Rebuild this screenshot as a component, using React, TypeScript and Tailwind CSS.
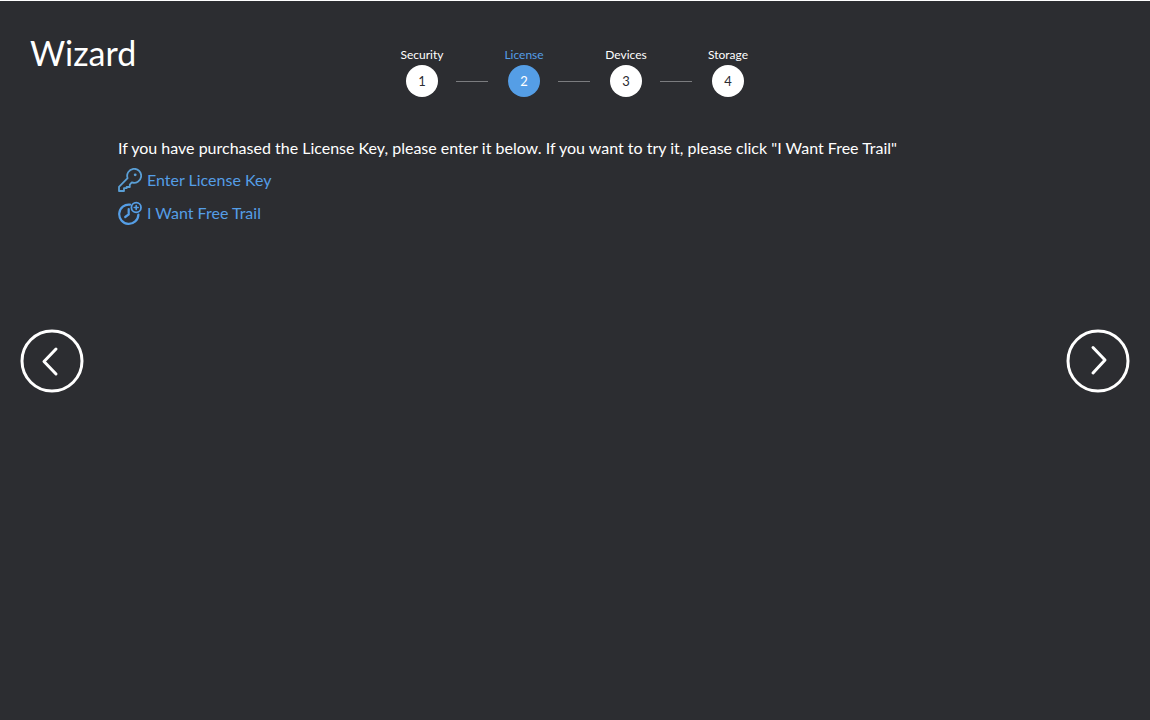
import * as React from 'react';
import { useState } from 'react';
import clsx from 'clsx';

const steps = ['Security', 'License', 'Devices', 'Storage'];

function KeyIcon() {
  return (
    <svg className="w-6 h-6 shrink-0 text-[#5a9fd6]" viewBox="0 0 24 24" fill="none" stroke="currentColor" strokeWidth="1.8" strokeLinejoin="round" aria-hidden="true">
      <path d="M9.6 10.2A7 7 0 1 1 13.8 14.4L11.8 16.6V19H8.6V20.2H6V23H1V18.8Z" />
      <circle cx="17.2" cy="6.8" r="1.4" fill="currentColor" stroke="none" />
    </svg>
  );
}

function TrialIcon() {
  return (
    <svg className="w-6 h-6 shrink-0" viewBox="0 0 24 24" fill="none" stroke="currentColor" strokeWidth="2.2" strokeLinecap="round" aria-hidden="true">
      <path d="M12 3.7A9.6 9.6 0 1 0 20.4 13.6" />
      <path d="M10.7 8V13.4L7.2 16" />
      <circle cx="18.2" cy="6.5" r="4.8" strokeWidth="1.8" />
      <path d="M18.2 4.5V8.5M16.2 6.5H20.2" strokeWidth="1.6" />
    </svg>
  );
}

interface NavButtonProps {
  direction: 'prev' | 'next';
  onClick: () => void;
}

function NavButton({ direction, onClick }: NavButtonProps) {
  return (
    <button onClick={onClick} className="shrink-0 w-16 h-16 cursor-pointer" aria-label={direction === 'prev' ? 'Previous' : 'Next'}>
      <svg className="w-16 h-16" viewBox="0 0 64 64" fill="none" stroke="currentColor" strokeWidth="3" strokeLinecap="round" strokeLinejoin="round">
        <circle cx="32" cy="32" r="30" />
        <path d={direction === 'prev' ? 'M36 20L24 32.5L36 45' : 'M27 18.5L39 31L27 44'} />
      </svg>
    </button>
  );
}

export default function App() {
  const [current, setCurrent] = useState(1);

  return (
    <div className="min-h-screen flex flex-col border-t border-white bg-[#2c2d31] text-white font-['Lato','Liberation_Sans',sans-serif]">
      <header className="h-28 grid grid-cols-[1fr_auto_1fr] items-start px-[30px]">
        <h1 className="pt-7 text-[34px] leading-12 font-normal">Wizard</h1>
        <ol className="flex items-end pt-[44px]">
          {steps.map((step, index) => (
            <React.Fragment key={step}>
              {index > 0 && <li className="w-8 h-px ml-[2px] mr-1 mb-[15px] bg-[#7b7c7f]" aria-hidden="true" />}
              <li className={clsx('w-16 flex flex-col items-center text-[12px] leading-5', index === current && 'text-[#559ee6]')}>
                <span>{step}</span>
                <span
                  className={clsx(
                    'w-8 h-8 rounded-full flex items-center justify-center text-[13px]',
                    index === current ? 'bg-[#559ee6] text-white' : 'bg-white text-[#2c2d31]'
                  )}
                >
                  {index + 1}
                </span>
              </li>
            </React.Fragment>
          ))}
        </ol>
      </header>

      <main className="flex-1 flex items-center gap-[34px] px-5 pb-28">
        <NavButton direction="prev" onClick={() => setCurrent(Math.max(current - 1, 0))} />
        <section className="flex-1 self-stretch pt-[23px] text-[16px] leading-6">
          <p>If you have purchased the License Key, please enter it below. If you want to try it, please click "I Want Free Trail"</p>
          <div className="flex flex-col items-start gap-[9px] pt-2 text-[#559ee6]">
            <a href="#license" className="flex items-center gap-[5px]">
              <KeyIcon />
              Enter License Key
            </a>
            <a href="#trial" className="flex items-center gap-[5px]">
              <TrialIcon />
              I Want Free Trail
            </a>
          </div>
        </section>
        <NavButton direction="next" onClick={() => setCurrent(Math.min(current + 1, steps.length - 1))} />
      </main>
    </div>
  );
}
